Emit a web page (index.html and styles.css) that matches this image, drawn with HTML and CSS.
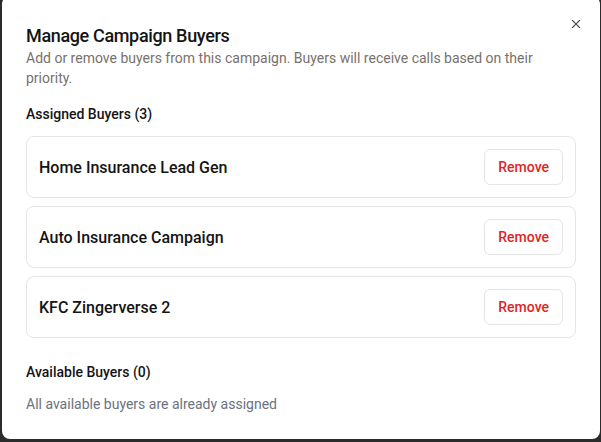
FILE: index.html
```html
<!DOCTYPE html>
<html lang="en">
<head>
<meta charset="utf-8">
<title>Manage Campaign Buyers</title>
<link rel="stylesheet" href="styles.css">
</head>
<body>
<div class="modal">
  <button class="close" aria-label="Close">
    <svg width="14" height="14" viewBox="0 0 24 24" fill="none" stroke="currentColor" stroke-width="2" stroke-linecap="round"><path d="M18 6 6 18"/><path d="m6 6 12 12"/></svg>
  </button>
  <div class="header">
    <h2 class="title">Manage Campaign Buyers</h2>
    <p class="desc">Add or remove buyers from this campaign. Buyers will receive calls based on their priority.</p>
  </div>
  <section class="section">
    <h3 class="section-title">Assigned Buyers (3)</h3>
    <div class="list">
      <div class="card"><span class="name">Home Insurance Lead Gen</span><button class="remove">Remove</button></div>
      <div class="card"><span class="name">Auto Insurance Campaign</span><button class="remove">Remove</button></div>
      <div class="card"><span class="name">KFC Zingerverse 2</span><button class="remove">Remove</button></div>
    </div>
  </section>
  <section class="section available">
    <h3 class="section-title">Available Buyers (0)</h3>
    <p class="empty">All available buyers are already assigned</p>
  </section>
</div>
</body>
</html>
```
FILE: styles.css
```css
* { box-sizing: border-box; }
html, body { margin: 0; padding: 0; }
body {
  width: 601px;
  height: 442px;
  overflow: hidden;
  background: #2b2b2b;
  font-family: Roboto, "Noto Sans", sans-serif;
  color: #111;
}
.modal {
  position: relative;
  margin: -4px 0 0 2px;
  width: 598px;
  height: 443px;
  background: #fff;
  border-radius: 8px;
  padding: 27px 24px 24px 24px;
}
.close {
  position: absolute;
  top: 20px;
  right: 16px;
  width: 16px;
  height: 16px;
  padding: 0;
  border: 0;
  background: none;
  color: #555;
  display: flex;
  align-items: center;
  justify-content: center;
}
.header { display: flex; flex-direction: column; }
.title {
  margin: 0;
  font-size: 18px;
  line-height: 25px;
  font-weight: 500;
  letter-spacing: -0.35px;
  color: #141414;
}
.desc {
  margin: 0;
  font-size: 14px;
  line-height: 20px;
  color: #78716c;
}
.section { margin-top: 16px; }
.section-title {
  margin: 0 0 12px;
  font-size: 14px;
  line-height: 20px;
  font-weight: 500;
  color: #141414;
}
.list { display: flex; flex-direction: column; gap: 8px; }
.card {
  display: flex;
  align-items: center;
  justify-content: space-between;
  border: 1px solid #e5e5e5;
  border-radius: 8px;
  padding: 12px;
}
.name { font-size: 16px; font-weight: 500; color: #141414; }
.remove {
  height: 36px;
  padding: 0 13px;
  border: 1px solid #e5e5e5;
  border-radius: 6px;
  background: #fff;
  color: #dc2626;
  font-family: inherit;
  font-size: 14px;
  font-weight: 500;
}
.available { margin-top: 24px; }
.empty {
  margin: 0;
  font-size: 14px;
  line-height: 20px;
  color: #6b7280;
}
```
